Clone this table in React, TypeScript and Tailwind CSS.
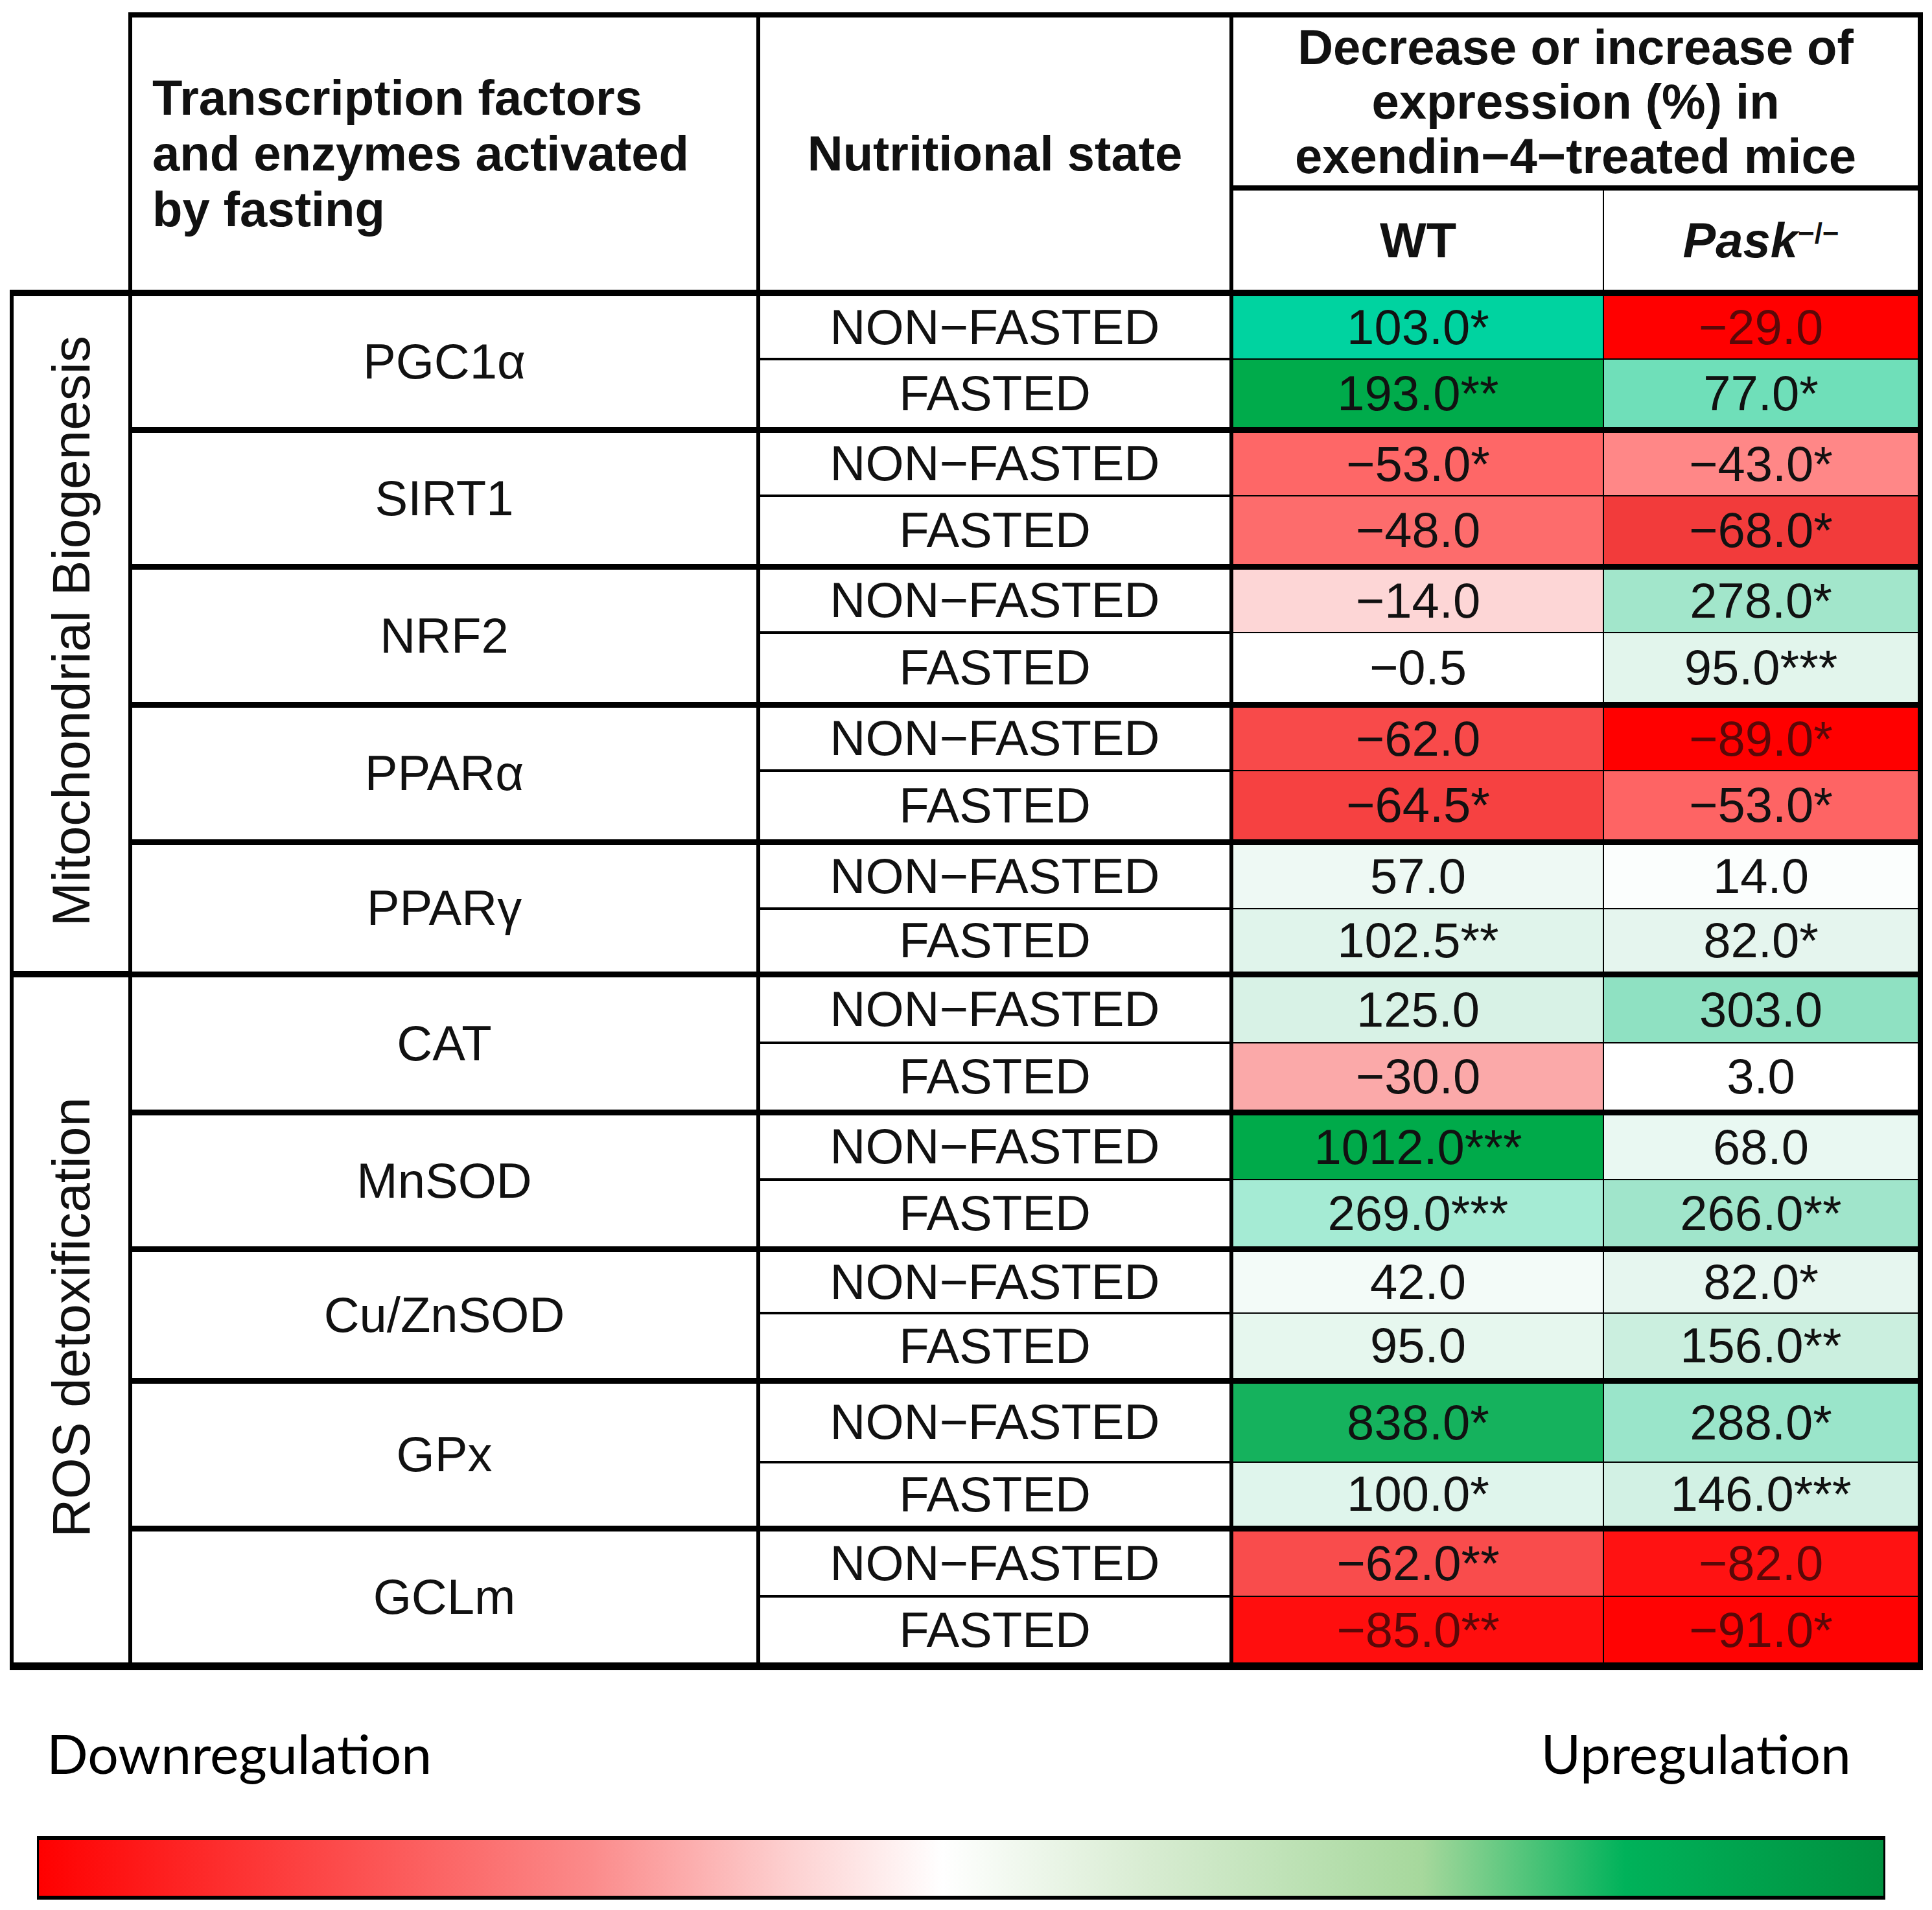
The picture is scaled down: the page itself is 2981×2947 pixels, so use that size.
type Cell = { v: string; bg: string; dark?: boolean };

type Gene = {
  name: string;
  hNf: string;
  hF: string;
  wt: [Cell, Cell];
  pask: [Cell, Cell];
};

type Section = { label: string; genes: Gene[] };

const sections: Section[] = [
  {
    label: "Mitochondrial Biogenesis",
    genes: [
      {
        name: "PGC1α",
        hNf: "h-[102px]",
        hF: "h-[109px]",
        wt: [
          { v: "103.0*", bg: "bg-[#00d3a0]" },
          { v: "193.0**", bg: "bg-[#00ab4b]" },
        ],
        pask: [
          { v: "−29.0", bg: "bg-[#ff0000]", dark: true },
          { v: "77.0*", bg: "bg-[#6fdfb9]" },
        ],
      },
      {
        name: "SIRT1",
        hNf: "h-[102px]",
        hF: "h-[109px]",
        wt: [
          { v: "−53.0*", bg: "bg-[#fe6767]" },
          { v: "−48.0", bg: "bg-[#fd6c6c]" },
        ],
        pask: [
          { v: "−43.0*", bg: "bg-[#ff8787]" },
          { v: "−68.0*", bg: "bg-[#f23b3b]" },
        ],
      },
      {
        name: "NRF2",
        hNf: "h-[102px]",
        hF: "h-[111px]",
        wt: [
          { v: "−14.0", bg: "bg-[#fdd6d6]" },
          { v: "−0.5", bg: "bg-[#ffffff]" },
        ],
        pask: [
          { v: "278.0*", bg: "bg-[#a2e6cb]" },
          { v: "95.0***", bg: "bg-[#e2f5ec]" },
        ],
      },
      {
        name: "PPARα",
        hNf: "h-[102px]",
        hF: "h-[110px]",
        wt: [
          { v: "−62.0", bg: "bg-[#f84a4a]" },
          { v: "−64.5*", bg: "bg-[#f64141]" },
        ],
        pask: [
          { v: "−89.0*", bg: "bg-[#ff0000]", dark: true },
          { v: "−53.0*", bg: "bg-[#fe6464]" },
        ],
      },
      {
        name: "PPARγ",
        hNf: "h-[103px]",
        hF: "h-[101px]",
        wt: [
          { v: "57.0", bg: "bg-[#eef9f4]" },
          { v: "102.5**", bg: "bg-[#e0f4eb]" },
        ],
        pask: [
          { v: "14.0", bg: "bg-[#fbfefd]" },
          { v: "82.0*", bg: "bg-[#e5f5ee]" },
        ],
      },
    ],
  },
  {
    label: "ROS detoxification",
    genes: [
      {
        name: "CAT",
        hNf: "h-[106px]",
        hF: "h-[107px]",
        wt: [
          { v: "125.0", bg: "bg-[#d8f2e6]" },
          { v: "−30.0", bg: "bg-[#fba9a9]" },
        ],
        pask: [
          { v: "303.0", bg: "bg-[#8fe1c2]" },
          { v: "3.0", bg: "bg-[#ffffff]" },
        ],
      },
      {
        name: "MnSOD",
        hNf: "h-[104px]",
        hF: "h-[107px]",
        wt: [
          { v: "1012.0***", bg: "bg-[#00aa4a]" },
          { v: "269.0***", bg: "bg-[#a5ebd4]" },
        ],
        pask: [
          { v: "68.0", bg: "bg-[#e9f8f2]" },
          { v: "266.0**", bg: "bg-[#a0e5cb]" },
        ],
      },
      {
        name: "Cu/ZnSOD",
        hNf: "h-[99px]",
        hF: "h-[104px]",
        wt: [
          { v: "42.0", bg: "bg-[#f3fbf8]" },
          { v: "95.0", bg: "bg-[#e6f7ee]" },
        ],
        pask: [
          { v: "82.0*", bg: "bg-[#e6f6ef]" },
          { v: "156.0**", bg: "bg-[#cbefdf]" },
        ],
      },
      {
        name: "GPx",
        hNf: "h-[126px]",
        hF: "h-[102px]",
        wt: [
          { v: "838.0*", bg: "bg-[#15b25d]" },
          { v: "100.0*", bg: "bg-[#dff5ec]" },
        ],
        pask: [
          { v: "288.0*", bg: "bg-[#9ae5ca]" },
          { v: "146.0***", bg: "bg-[#d2f1e4]" },
        ],
      },
      {
        name: "GCLm",
        hNf: "h-[105px]",
        hF: "h-[108px]",
        wt: [
          { v: "−62.0**", bg: "bg-[#f94c4c]" },
          { v: "−85.0**", bg: "bg-[#ff0e0e]", dark: true },
        ],
        pask: [
          { v: "−82.0", bg: "bg-[#ff1212]", dark: true },
          { v: "−91.0*", bg: "bg-[#ff0303]", dark: true },
        ],
      },
    ],
  },
];

const arial = "[font-family:Liberation_Sans,Arial,Helvetica,sans-serif]";

function Value({ cell, border }: { cell: Cell; border: string }) {
  return (
    <td className={`${arial} ${cell.bg} ${border} border-black text-center leading-none text-[76px] ${cell.dark ? "text-[#5a0808]" : "text-[#111]"}`}>
      {cell.v}
    </td>
  );
}

function SectionRows({ section, isLast }: { section: Section; isLast: boolean }) {
  return (
    <>
      {section.genes.map((g, i) => {
        const lastRow = isLast && i === section.genes.length - 1;
        const bottom = lastRow ? "border-b-[12px]" : "border-b-[9px]";
        return [
          <tr key={g.name + "-nf"} className={g.hNf}>
            {i === 0 && (
              <td
                rowSpan={section.genes.length * 2}
                className={`${arial} border-l-[6px] border-r-[6px] border-t-[10px] ${isLast ? "border-b-[12px]" : "border-b-[10px]"} border-black text-center`}
              >
                <span className="inline-block rotate-180 text-[82px] leading-none [writing-mode:vertical-rl]">
                  {section.label}
                </span>
              </td>
            )}
            <td rowSpan={2} className={`${arial} border-r-[6px] ${bottom} border-black text-center text-[76px] leading-none`}>
              {g.name}
            </td>
            <td className={`${arial} border-r-[6px] border-b-4 border-black text-center text-[76px] leading-none`}>NON−FASTED</td>
            <Value cell={g.wt[0]} border="border-r-2 border-b-2" />
            <Value cell={g.pask[0]} border="border-r-[8px] border-b-2" />
          </tr>,
          <tr key={g.name + "-f"} className={g.hF}>
            <td className={`${arial} border-r-[6px] ${bottom} border-black text-center text-[76px] leading-none`}>FASTED</td>
            <Value cell={g.wt[1]} border={`border-r-2 ${bottom}`} />
            <Value cell={g.pask[1]} border={`border-r-[8px] ${bottom}`} />
          </tr>,
        ];
      })}
    </>
  );
}

export default function App() {
  return (
    <div className="w-[2981px] h-[2947px] bg-white pl-[15px] pt-[19px] [font-family:Liberation_Sans,Arial,Helvetica,sans-serif] text-[#111]">
      {/* Expression table */}
      <table className="w-[2945px] table-fixed border-collapse">
        <colgroup>
          <col className="w-[183px]" />
          <col className="w-[969px]" />
          <col className="w-[730px]" />
          <col className="w-[574px]" />
          <col className="w-[489px]" />
        </colgroup>
        <thead>
          <tr className="h-[267px]">
            <th rowSpan={2} />
            <th
              rowSpan={2}
              className={`${arial} border-t-[8px] border-l-[6px] border-r-[6px] border-b-[10px] border-black pl-[31px] text-left text-[76px] font-bold leading-[86px]`}
            >
              Transcription factors
              <br />
              and enzymes activated
              <br />
              by fasting
            </th>
            <th
              rowSpan={2}
              className={`${arial} border-t-[8px] border-r-[6px] border-b-[10px] border-black text-center text-[76px] font-bold leading-none`}
            >
              Nutritional state
            </th>
            <th
              colSpan={2}
              className={`${arial} border-t-[8px] border-r-[8px] border-b-[8px] border-black text-center text-[76px] font-bold leading-[84px]`}
            >
              Decrease or increase of
              <br />
              expression (%) in
              <br />
              exendin−4−treated mice
            </th>
          </tr>
          <tr className="h-[162px]">
            <th className={`${arial} border-r-2 border-b-[10px] border-black text-center text-[76px] font-bold leading-none`}>WT</th>
            <th className={`${arial} border-r-[8px] border-b-[10px] border-black text-center text-[76px] font-bold leading-none`}>
              <i>Pask</i>
              <sup className="text-[44px]">−/−</sup>
            </th>
          </tr>
        </thead>
        <tbody>
          {sections.map((s, i) => (
            <SectionRows key={s.label} section={s} isLast={i === sections.length - 1} />
          ))}
        </tbody>
      </table>

      {/* Colour scale legend */}
      <div className="mt-[78px] flex w-[2946px] items-center justify-between pl-[57px] pr-[105px] [font-family:Lato,sans-serif] text-[84px] leading-[100px] text-black">
        <span>Downregulation</span>
        <span>Upregulation</span>
      </div>
      <div className="ml-[42px] mt-[78px] h-[98px] w-[2852px] border-x-[3px] border-y-[6px] border-black bg-[linear-gradient(to_right,#ff0000_0%,#fc4a4a_16%,#fb8b8b_30%,#fdd2d2_41%,#ffffff_49%,#d8ecd2_60%,#a6d89c_75%,#00b25a_86%,#00913f_100%)]" />
    </div>
  );
}
